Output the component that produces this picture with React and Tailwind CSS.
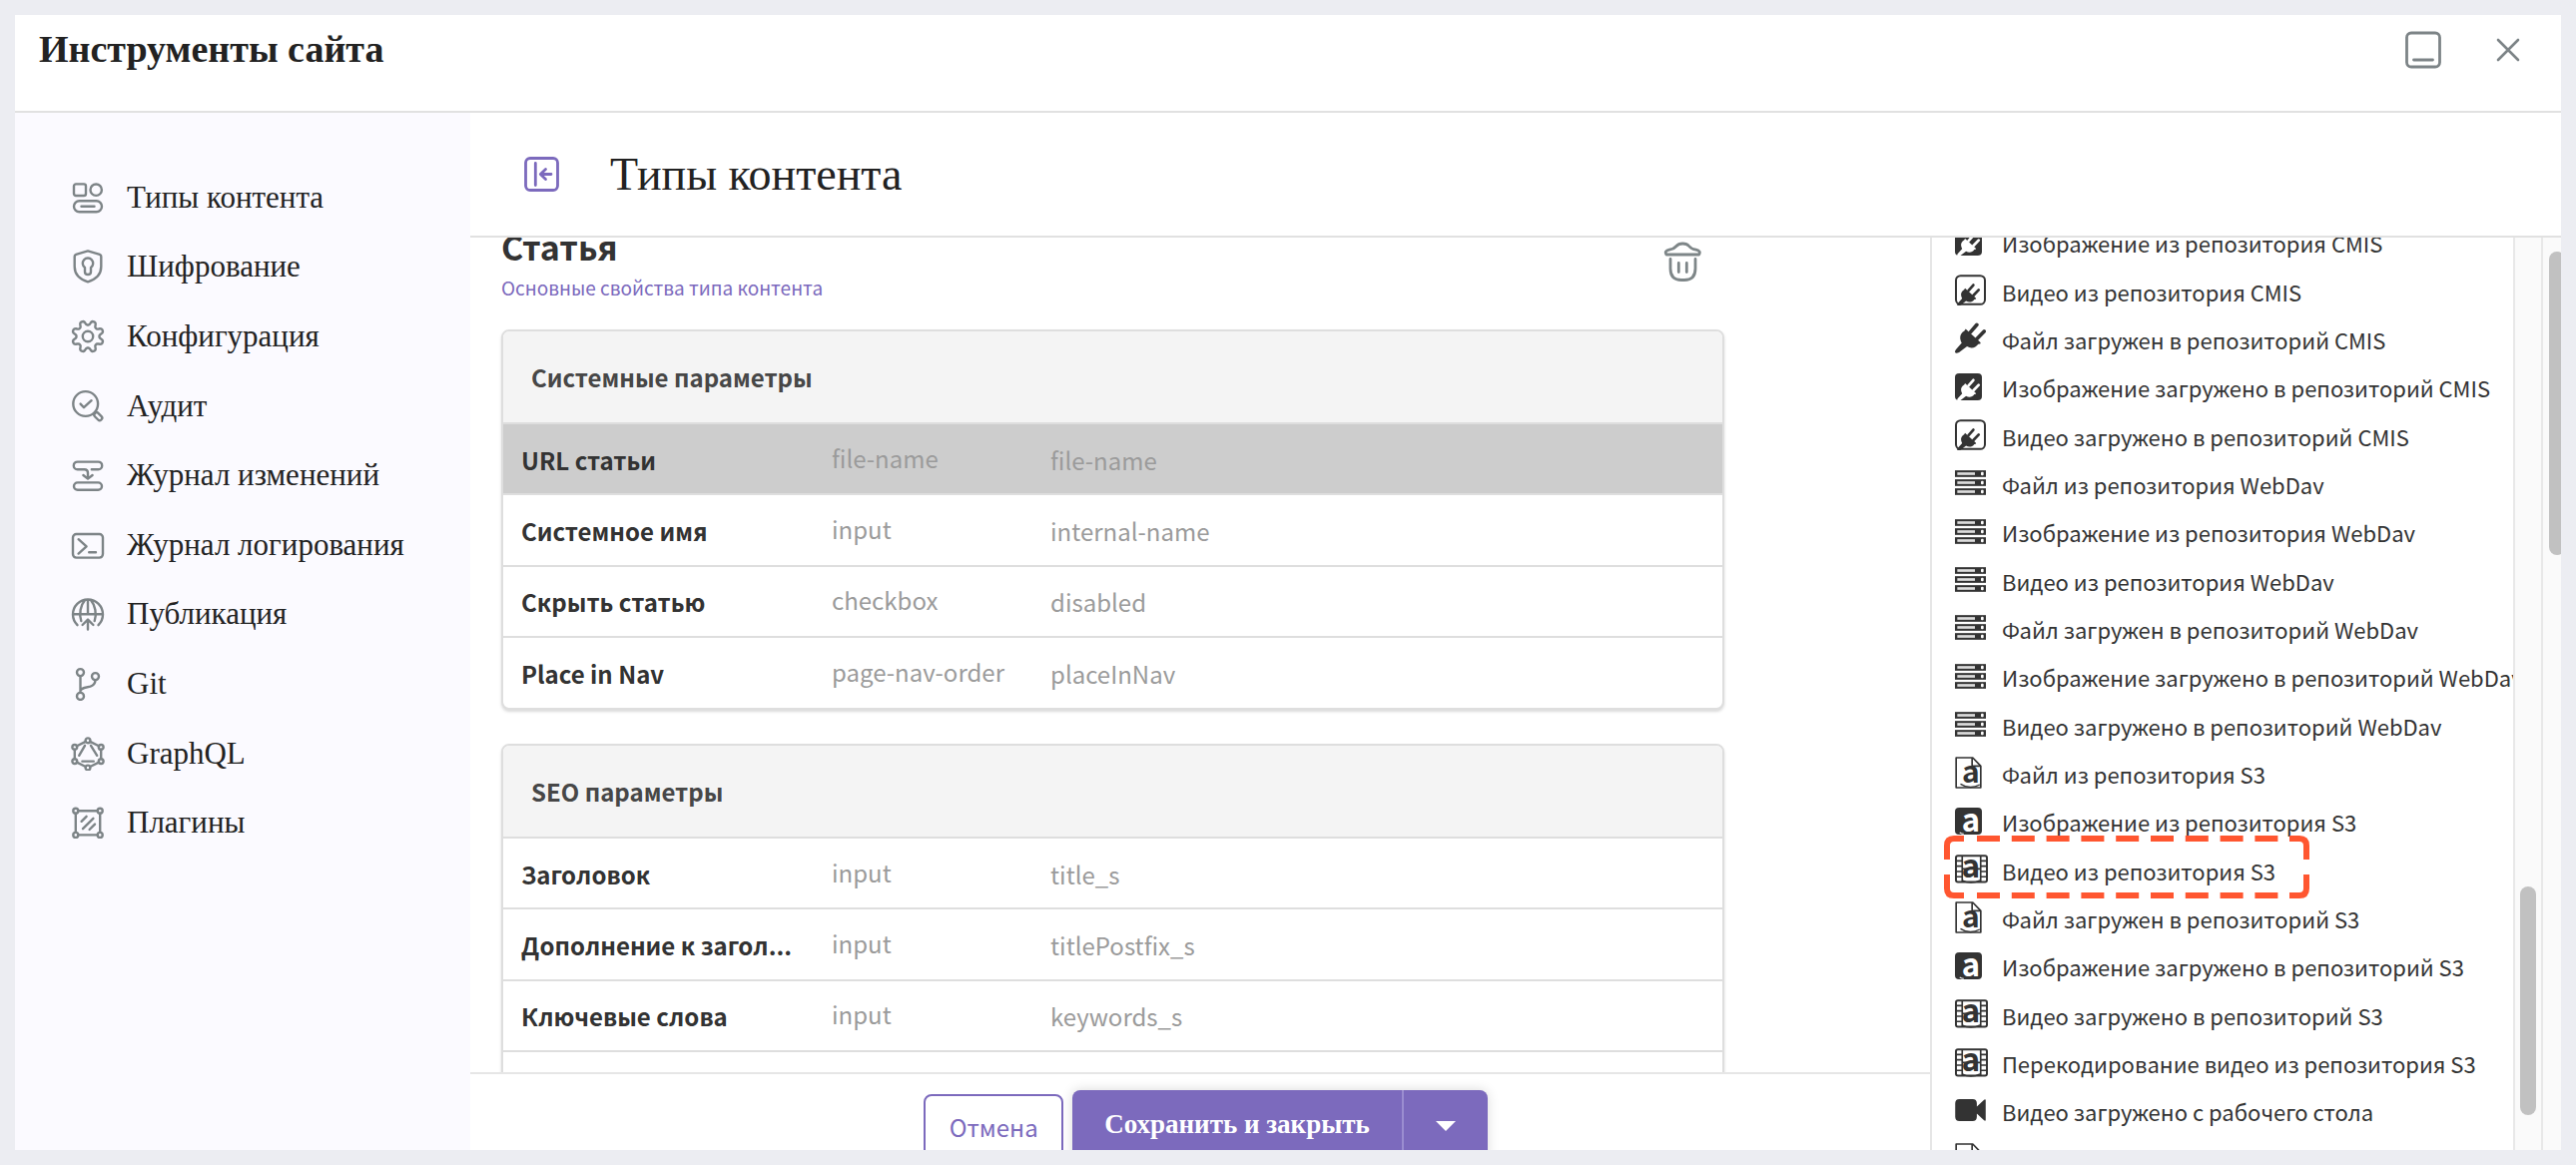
const toothed = (() => {
  const pts = [];
  for (let i = 0; i < 144; i++) {
    const a = (i / 144) * Math.PI * 2;
    const wave = Math.tanh(1.6 * Math.cos(8 * (a - Math.PI / 8))) / Math.tanh(1.6);
    const r = 13.7 + 2.2 * wave;
    pts.push(`${(17 + r * Math.sin(a)).toFixed(2)} ${(17 - r * Math.cos(a)).toFixed(2)}`);
  }
  return `M${pts.join("L")}Z`;
})();

const NAV = [
  ["Типы контента", (
    <>
      <rect x="3" y="3.4" width="12" height="11.6" rx="2" />
      <circle cx="25.2" cy="9.2" r="5.7" />
      <rect x="3" y="20.3" width="28" height="11" rx="5.5" />
      <path d="M10.5 25.8h13" />
    </>
  )],
  ["Шифрование", (
    <>
      <path d="M17 1.4 28.8 4.8Q30.3 5.3 30.3 7V17C30.3 25 24.5 30 17 32.3 9.5 30 3.7 25 3.7 17V7Q3.7 5.3 5.2 4.8Z" />
      <path d="M14 18A5.2 5.2 0 1 1 20 18V22.3Q20 25 17 25T14 22.3Z" />
    </>
  )],
  ["Конфигурация", (
    <>
      <path d={toothed} />
      <circle cx="17" cy="17" r="5.2" />
    </>
  )],
  ["Аудит", (
    <>
      <circle cx="14.7" cy="14.5" r="12.4" />
      <path d="m9.6 14.6 3.4 3.6 7.6-7" />
      <rect x="22.8" y="24.8" width="9" height="4.8" rx="2.2" transform="rotate(45 27.3 27.2)" />
    </>
  )],
  ["Журнал изменений", (
    <>
      <path d="M20.8 11.2H27.4a3.8 3.8 0 0 0 0-7.6H6.6a3.8 3.8 0 0 0 0 7.6H13.5Q17 11.2 17 14.8V20.4M12.4 17 17 20.6 21.6 17" />
      <rect x="3" y="24.4" width="28" height="7.4" rx="3.7" />
    </>
  )],
  ["Журнал логирования", (
    <>
      <rect x="2" y="6" width="30" height="23.6" rx="3.5" />
      <path d="m7.6 11.2 8 7.2-8 7.2M18.2 24.3h6.8" />
    </>
  )],
  ["Публикация", (
    <>
      <path d="M6.5 28.2A15 15 0 1 1 27.5 28.2M2.4 17.3H31.6M17 2.6V17.3M14 3.2C9.3 8.6 8.2 17 10.3 24M20 3.2C24.7 8.6 25.8 17 23.7 24" />
      <path d="M17 32.6V22.8M11.6 28 17 22.6 22.4 28" />
    </>
  )],
  ["Git", (
    <>
      <circle cx="9.5" cy="5.6" r="3.5" />
      <circle cx="24.5" cy="9.6" r="3.5" />
      <circle cx="9.5" cy="29.4" r="3.5" />
      <path d="M9.5 9.2V25.8M24.5 13.2Q24.3 18 19.5 19.6L13.5 21Q10 22 9.5 24" />
    </>
  )],
  ["GraphQL", (
    <>
      <circle cx="17" cy="3.8" r="2.4" />
      <circle cx="30.2" cy="10.4" r="2.4" />
      <circle cx="30.2" cy="24.6" r="2.4" />
      <circle cx="17" cy="31" r="2.4" />
      <circle cx="3.8" cy="24.6" r="2.4" />
      <circle cx="3.8" cy="10.4" r="2.4" />
      <path d="M19.2 4.9 28 9.3M30.2 12.8V22.2M28 25.7 19.2 30M14.8 30 6 25.7M3.8 22.2V12.8M6 9.3 14.8 4.9" />
      <path d="M8.2 18.8 14 8.8M20 8.8 26.2 18.8M11.4 24.6H22.8" />
    </>
  )],
  ["Плагины", (
    <>
      <circle cx="4.8" cy="5.2" r="2.5" />
      <circle cx="29.2" cy="5.2" r="2.5" />
      <circle cx="4.8" cy="29.4" r="2.5" />
      <circle cx="29.2" cy="29.4" r="2.5" />
      <path d="M7.3 5.2H26.7M29.2 7.8V26.8M26.7 29.4H7.3M4.8 26.8V7.8" />
      <path d="m10.6 15.8 5-5M12 23.2 22.4 12.8M18.6 24 24 18.6" />
    </>
  )],
];

const PLUG = "M32 20 76 60q3 4-1 5l-5 1C62 78 48 80 36 73L12 91Q2 96 0 91T4 80L20 62C12 48 14 34 28 26Z";

function Plug({ color }) {
  return (
    <>
      <path d={PLUG} fill={color} />
      <path d="M46 30 66 7M66 50 88 27" stroke={color} strokeWidth="11" strokeLinecap="round" />
    </>
  );
}

function LetterA({ x, y, size, fill }) {
  return (
    <text
      x={x}
      y={y}
      fontSize={size}
      fontWeight="700"
      textAnchor="middle"
      fill={fill}
      fontFamily="'Noto Sans CJK SC', sans-serif"
    >
      a
    </text>
  );
}

const DARK = "#333333";

const SOURCE_ICONS = {
  plug: { w: 93, h: 94, art: <Plug color={DARK} /> },
  plugImage: {
    w: 80, h: 80,
    art: (
      <>
        <rect width="80" height="80" rx="12" fill={DARK} />
        <g transform="translate(7 15) scale(.72)"><Plug color="#fff" /></g>
      </>
    ),
  },
  plugVideo: {
    w: 93, h: 92,
    art: (
      <>
        <rect x="3" y="3" width="87" height="86" rx="14" fill="none" stroke={DARK} strokeWidth="6" />
        <g transform="translate(7 26) scale(.73)"><Plug color={DARK} /></g>
      </>
    ),
  },
  server: {
    w: 93, h: 74,
    art: [0, 27, 54].map((y) => (
      <g key={y}>
        <rect y={y} width="93" height="20" fill={DARK} />
        <rect x="7" y={y + 6} width="53" height="8" fill="#dddddd" />
        <rect x="78" y={y + 5} width="8" height="10" rx="3" fill="#ffffff" />
      </g>
    )),
  },
  s3File: {
    w: 80, h: 96,
    art: (
      <>
        <path d="M3 3H53L77 28V93H3Z" fill="none" stroke={DARK} strokeWidth="5" strokeLinejoin="round" />
        <path d="M51 3V28H77" fill="none" stroke={DARK} strokeWidth="5" />
        <path d="M16 82Q44 100 74 84" fill="none" stroke={DARK} strokeWidth="4" />
        <LetterA x="47" y="77" size="90" fill={DARK} />
      </>
    ),
  },
  s3Image: {
    w: 80, h: 80,
    art: (
      <>
        <rect width="80" height="80" rx="12" fill={DARK} />
        <LetterA x="47" y="70" size="92" fill="#fff" />
        <path d="M14 74Q20 78 26 78" fill="none" stroke="#fff" strokeWidth="3" />
      </>
    ),
  },
  s3Video: {
    w: 100, h: 87,
    art: (
      <>
        <rect x="3" y="3" width="94" height="80" rx="6" fill="none" stroke={DARK} strokeWidth="6" />
        <path d="M22 3V83M78 3V83M3 19H22M3 35H22M3 51H22M3 67H22M78 19H97M78 35H97M78 51H97M78 67H97M22 43H78" stroke={DARK} strokeWidth="5" />
        <LetterA x="48" y="69" size="96" fill={DARK} />
        <path d="M22 78Q48 92 76 78" fill="none" stroke={DARK} strokeWidth="4" />
      </>
    ),
  },
  camera: {
    w: 93, h: 67,
    art: (
      <path d="M13 0H53Q66 0 66 13V23L88 2Q93-1 93 4V63Q93 68 88 65L66 44V54Q66 67 53 67H13Q0 67 0 54V13Q0 0 13 0Z" fill={DARK} />
    ),
  },
};

const SOURCES = [
  ["plugImage", "Изображение из репозитория CMIS"],
  ["plugVideo", "Видео из репозитория CMIS"],
  ["plug", "Файл загружен в репозиторий CMIS"],
  ["plugImage", "Изображение загружено в репозиторий CMIS"],
  ["plugVideo", "Видео загружено в репозиторий CMIS"],
  ["server", "Файл из репозитория WebDav"],
  ["server", "Изображение из репозитория WebDav"],
  ["server", "Видео из репозитория WebDav"],
  ["server", "Файл загружен в репозиторий WebDav"],
  ["server", "Изображение загружено в репозиторий WebDav"],
  ["server", "Видео загружено в репозиторий WebDav"],
  ["s3File", "Файл из репозитория S3"],
  ["s3Image", "Изображение из репозитория S3"],
  ["s3Video", "Видео из репозитория S3", true],
  ["s3File", "Файл загружен в репозиторий S3"],
  ["s3Image", "Изображение загружено в репозиторий S3"],
  ["s3Video", "Видео загружено в репозиторий S3"],
  ["s3Video", "Перекодирование видео из репозитория S3"],
  ["camera", "Видео загружено с рабочего стола"],
  ["s3File", ""],
];

const SECTIONS = [
  {
    title: "Системные параметры",
    rows: [
      ["URL статьи", "file-name", "file-name", true],
      ["Системное имя", "input", "internal-name"],
      ["Скрыть статью", "checkbox", "disabled"],
      ["Place in Nav", "page-nav-order", "placeInNav"],
    ],
  },
  {
    title: "SEO параметры",
    rows: [
      ["Заголовок", "input", "title_s"],
      ["Дополнение к загол...", "input", "titlePostfix_s"],
      ["Ключевые слова", "input", "keywords_s"],
      ["", "", ""],
    ],
  },
];

function Highlight() {
  return (
    <svg className="pointer-events-none absolute -top-3.5 left-3 h-[63px] w-[366px]" viewBox="0 0 366 63" fill="none" stroke="#ff5630" strokeWidth="6" aria-hidden="true">
      <path d="M3 24V10Q3 3 10 3H20M346 3H356Q363 3 363 10V24M363 39V53Q363 60 356 60H346M20 60H10Q3 60 3 53V39" />
      <path d="M33 3H335M33 60H335" strokeDasharray="23 11.8" />
    </svg>
  );
}

function SourceItem({ icon, label, highlighted }) {
  const { w, h, art } = SOURCE_ICONS[icon];
  return (
    <li className="relative flex min-h-0 items-center pl-[23px]">
      <span className="flex w-[47px] shrink-0 pb-2">
        <svg width={Math.round(w / 3)} height={Math.round(h / 3)} viewBox={`0 0 ${w} ${h}`} fill="none" aria-hidden="true">{art}</svg>
      </span>
      <span className="pb-1.5 text-[22px] leading-8 whitespace-nowrap">{label}</span>
      {highlighted && <Highlight />}
    </li>
  );
}

function Section({ title, rows }) {
  return (
    <section className="overflow-hidden rounded-lg border-2 border-[#dedede] bg-white shadow-[0_2px_3px_rgba(0,0,0,0.15)]">
      <h3 className="flex h-[91px] items-center bg-[#f4f4f4] pl-7 text-2xl font-bold text-[#474747]">{title}</h3>
      <table className="h-[286px] w-full table-fixed border-collapse text-left text-2xl">
        <colgroup>
          <col className="w-[329px]" />
          <col className="w-[219px]" />
          <col />
        </colgroup>
        <tbody>
          {rows.map(([label, type, name, selected], i) => (
            <tr key={i} className={selected ? "h-[71px] border-t-2 border-[#dedede] bg-[#cdcdcd]" : "h-[71px] border-t-2 border-[#dedede]"}>
              <th scope="row" className="truncate pt-0.5 pl-[18px] font-bold text-[#333333]">{label}</th>
              <td className="pb-0.5 text-[#9b9b9b]">{type}</td>
              <td className="pt-0.5 text-[#9b9b9b]">{name}</td>
            </tr>
          ))}
        </tbody>
      </table>
    </section>
  );
}

export default function App() {
  return (
    <div className="h-screen overflow-hidden bg-[#ecedf2] p-[15px] font-['Noto_Sans_CJK_SC',sans-serif] text-[#333333]">
      <div className="flex h-full flex-col overflow-hidden bg-white">
        <header className="flex h-[98px] shrink-0 items-start justify-between border-b-2 border-[#e1e1e1] pr-[41px] pl-6">
          <h1 className="pt-3 font-['Liberation_Serif',serif] text-[38px] leading-[44px] font-bold text-[#222222]">Инструменты сайта</h1>
          <div className="flex items-center gap-[55px] pt-4">
            <button type="button" aria-label="Свернуть">
              <svg className="h-[38px] w-9" viewBox="0 0 36 38" fill="none" stroke="#7d8487" strokeWidth="2.8" strokeLinecap="round">
                <rect x="1.5" y="2" width="33" height="34" rx="4.5" />
                <path d="M8.5 29H27.5" />
              </svg>
            </button>
            <button type="button" aria-label="Закрыть">
              <svg className="size-6" viewBox="0 0 24 24" fill="none" stroke="#7d8487" strokeWidth="2.6" strokeLinecap="round">
                <path d="M2 2 22 22M22 2 2 22" />
              </svg>
            </button>
          </div>
        </header>

        <div className="flex min-h-0 flex-1">
          <nav className="w-[456px] shrink-0 bg-[#fbfaff] pt-[50px]">
            <ul className="grid h-[696px] auto-rows-fr">
              {NAV.map(([label, art]) => (
                <li key={label} className="flex">
                  <a href="#" className="flex flex-1 items-center gap-[22px] pl-14 font-['Liberation_Serif',serif] text-[31px] leading-9 text-[#222222]">
                    <svg className="size-[34px] shrink-0" viewBox="0 0 34 34" fill="none" stroke="#7d8487" strokeWidth="2.4" strokeLinecap="round" strokeLinejoin="round" aria-hidden="true">{art}</svg>
                    {label}
                  </a>
                </li>
              ))}
            </ul>
          </nav>

          <div className="flex min-w-0 flex-1 flex-col">
            <div className="flex h-[125px] shrink-0 items-center gap-[51px] border-b-2 border-[#e1e1e1] pl-[54px]">
              <button type="button" aria-label="Скрыть меню">
                <svg className="size-[35px]" viewBox="0 0 35 35" fill="none" stroke="#7c6abd" strokeWidth="2.8" strokeLinecap="round" strokeLinejoin="round">
                  <rect x="1.5" y="1.5" width="32" height="32" rx="4.5" />
                  <path d="M11.3 6.5V28.5M27 17.5H16.5M21.5 12.5 16.3 17.5 21.5 22.5" />
                </svg>
              </button>
              <h2 className="font-['Liberation_Serif',serif] text-[46px] leading-[52px] text-[#222222]">Типы контента</h2>
            </div>

            <div className="flex min-h-0 flex-1">
              <div className="flex min-w-0 flex-1 flex-col">
                <main className="min-h-0 flex-1 overflow-hidden pr-[206px] pl-[31px]">
                  <div className="flex h-[92px] items-start justify-between">
                    <div>
                      <h2 className="-mt-3.5 text-[34px] leading-[46px] font-bold">Статья</h2>
                      <a href="#" className="block text-[19px] leading-9 text-[#7c6abd]">Основные свойства типа контента</a>
                    </div>
                    <button type="button" aria-label="Удалить" className="mt-1 mr-[22px]">
                      <svg className="h-[42px] w-10" viewBox="0 0 40 42" fill="none" stroke="#7e8688" strokeWidth="2.8" strokeLinecap="round" strokeLinejoin="round">
                        <path d="M4 13Q1.500 9.500 7 8.200 11.500 7.500 14 4.500 16 2 20.300 2T26.600 4.500Q29 7.500 33.600 8.200 39 9.500 36.600 13Z" />
                        <path d="M8 17.500V27Q8 38.500 19 38.500H22Q33 38.500 33 27V17.500M16.300 21.500V30.500M24.300 21.500V30.500" />
                      </svg>
                    </button>
                  </div>
                  <div className="flex flex-col gap-[34px]">
                    {SECTIONS.map((s) => <Section key={s.title} {...s} />)}
                  </div>
                </main>
                <footer className="flex h-[78px] shrink-0 items-start justify-center gap-[9px] overflow-hidden border-t-2 border-[#e6e6e6] pt-4 pl-[11px]">
                  <button type="button" className="mt-1 h-[66px] w-[140px] shrink-0 rounded-lg border-2 border-[#7c6abd] bg-white text-2xl text-[#7c6abd]">Отмена</button>
                  <div className="flex h-[72px] shrink-0 overflow-hidden rounded-lg bg-[#7c6abd] text-white shadow-[0_0_12px_rgba(0,0,0,0.15)]">
                    <button type="button" className="px-8 pb-1 font-['Liberation_Serif',serif] text-[27px] font-bold">Сохранить и закрыть</button>
                    <button type="button" aria-label="Другие действия" className="flex w-[86px] items-center justify-center border-l-2 border-[#9b8dd0]">
                      <svg className="h-2.5 w-5" viewBox="0 0 20 10" fill="currentColor"><path d="M0 0H20L10 10Z" /></svg>
                    </button>
                  </div>
                </footer>
              </div>

              <aside className="w-[584px] shrink-0 overflow-hidden border-l-2 border-[#e6e6e6]">
                <ul className="-mt-4 grid h-[967px] auto-rows-fr">
                  {SOURCES.map(([icon, label, highlighted], i) => (
                    <SourceItem key={i} icon={icon} label={label} highlighted={highlighted} />
                  ))}
                </ul>
              </aside>
              <div className="flex w-[30px] shrink-0 flex-col items-center border-x-2 border-[#e8e8e8] bg-[#fafafa] pt-[650px]">
                <div className="h-[229px] w-4 shrink-0 rounded-full bg-[#c1c1c1]" />
              </div>
              <div className="w-[18px] shrink-0 overflow-hidden bg-[#fafafa] pt-3.5 pl-1.5">
                <div className="h-[304px] w-4 rounded-full bg-[#c1c1c1]" />
              </div>
            </div>
          </div>
        </div>
      </div>
    </div>
  );
}
